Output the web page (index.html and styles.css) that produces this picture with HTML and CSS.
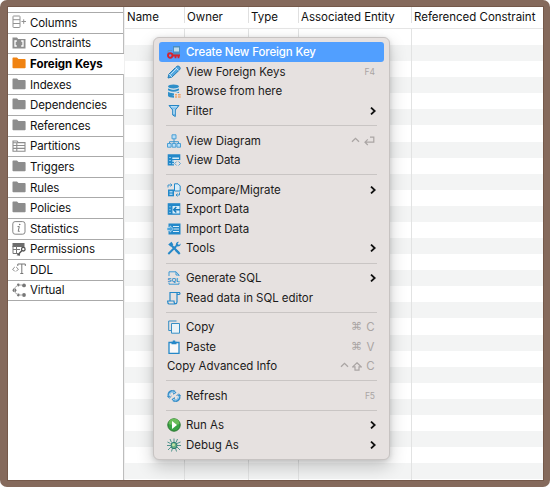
FILE: index.html
```html
<!DOCTYPE html>
<html lang="en">
<head>
<meta charset="utf-8">
<title>Foreign Keys</title>
<link rel="stylesheet" href="styles.css">
</head>
<body>
<svg class="defs" width="0" height="0">
  <symbol id="folder" viewBox="0 0 14 12"><path d="M.5 1.2Q.5.5 1.2.5H5l1.500 1.600h6.300Q13.600 2.100 13.600 2.900V10.500Q13.600 11.300 12.800 11.300H1.300Q.5 11.300.5 10.500Z" fill="currentColor"/></symbol>
  <symbol id="chevron" viewBox="0 0 6 8"><path d="M1 .6 4.700 4 1 7.400" fill="none" stroke="#111" stroke-width="1.800"/></symbol>
  <symbol id="ctrl" viewBox="0 0 9 6"><path d="M1 4.800 4.500 1.300 8 4.800" fill="none" stroke="currentColor" stroke-width="1.300"/></symbol>
</svg>
<div class="window">
  <nav class="sidebar">
    <div class="tab"><svg viewBox="0 0 14 14"><g fill="none" stroke="#929292"><rect x="1" y="1" width="7" height="11.500" rx=".6"/><path d="M1 4.700h7M1 8.500h7M9.500 6.500H14M11.700 4.300v4.500"/></g></svg><span>Columns</span></div>
    <div class="tab"><svg viewBox="0 0 14 14"><path d="M.5 1.500H5l1.200 1.500h7.300v9.500H.5z" fill="#8d8d8d"/><path d="M4.800 5H3v5h1.800M9.200 5H11v5H9.200" fill="none" stroke="#fff" stroke-width="1.300"/></svg><span>Constraints</span></div>
    <div class="tab active"><svg class="folder"><use href="#folder"/></svg><span>Foreign Keys</span></div>
    <div class="tab"><svg class="folder"><use href="#folder"/></svg><span>Indexes</span></div>
    <div class="tab"><svg class="folder"><use href="#folder"/></svg><span>Dependencies</span></div>
    <div class="tab"><svg class="folder"><use href="#folder"/></svg><span>References</span></div>
    <div class="tab"><svg viewBox="0 0 14 14"><path d="M1 2h4l1.200 1.500H13v8.700H1zM1 3.700h12M1 6.500h12M1 9.400h12M4.800 3.700v8.500" fill="none" stroke="#8d8d8d" stroke-width="1.100"/></svg><span>Partitions</span></div>
    <div class="tab"><svg class="folder"><use href="#folder"/></svg><span>Triggers</span></div>
    <div class="tab"><svg class="folder"><use href="#folder"/></svg><span>Rules</span></div>
    <div class="tab"><svg class="folder"><use href="#folder"/></svg><span>Policies</span></div>
    <div class="tab"><svg viewBox="0 0 14 14"><rect x=".8" y=".6" width="12.200" height="12.600" rx="2.300" fill="none" stroke="#858585"/><path d="M5.500 5.600h1.800L6.200 10.300h1.500" fill="none" stroke="#777"/><circle cx="7.700" cy="3.500" r=".8" fill="#777"/></svg><span>Statistics</span></div>
    <div class="tab"><svg viewBox="0 0 14 14"><path d="M.5 1h12v4H.5z" fill="#6d6d6d"/><path d="M1 4v7.500h5M1 7.500h7M4.500 4v7.500" fill="none" stroke="#777"/><circle cx="11.300" cy="7.200" r="1.800" fill="none" stroke="#555" stroke-width="1.300"/><path d="m10 8.500-4 4.200 2 .3" fill="none" stroke="#555" stroke-width="1.400"/></svg><span>Permissions</span></div>
    <div class="tab"><svg viewBox="0 0 14 14"><path d="M2.800 5 .6 7.200l2.200 2.200M4.200 5l2.200 2.200-2.200 2.200" fill="none" stroke="#858585"/><path d="M5.800 4V2h7.500v2M9.800 2v9.500M8.300 11.500h3" fill="none" stroke="#777"/></svg><span>DDL</span></div>
    <div class="tab"><svg viewBox="0 0 14 14"><g fill="#777"><circle cx="6.300" cy="2" r="1.400"/><circle cx="12" cy="2.400" r="1.900"/><circle cx="2.500" cy="7.200" r="1.900"/><circle cx="6.300" cy="12" r="1.400"/><circle cx="12" cy="12" r="1.900"/></g><path d="M6 2 2.500 5v4L6 12M7 2h3M7 12h3" fill="none" stroke="#aaa"/></svg><span>Virtual</span></div>
  </nav>
  <main class="table">
    <div class="head"><div class="c1">Name</div><div class="c2">Owner</div><div class="c3">Type</div><div class="c4">Associated Entity</div><div class="c5">Referenced Constraint</div></div>
    <div class="body"><div class="c1"></div><div class="c2"></div><div class="c3"></div><div class="c4"></div><div class="c5"></div></div>
  </main>
</div>

<div class="menu">
  <div class="item selected"><svg viewBox="0 0 14 14"><path d="M6 1h7v9H6z" fill="#4c8fc3"/><path d="M7 2.500h5v4H7z" fill="#c1dceb"/><path d="M1 5.500h4M1 8V5.500" stroke="#6794b5" fill="none"/><circle cx="3.200" cy="10.500" r="2.200" fill="none" stroke="#d6222d" stroke-width="1.900"/><path d="M5 10.500h8M8.500 10.500v2.700M11.500 10.500v2.700" stroke="#d6222d" stroke-width="1.800"/></svg><span>Create New Foreign Key</span></div>
  <div class="item"><svg viewBox="0 0 14 14"><path d="m1 13 1-4 7.500-7.500Q11 .3 12.500 1.700T12.600 4.800L5 12Z" fill="#55a8df" stroke="#237eb9"/><path d="M3.500 9.500 10 3M8.500 2.500l3 3M2 9l3 3" stroke="#d8edfa" stroke-width=".8"/></svg><span>View Foreign Keys</span><kbd class="small">F4</kbd></div>
  <div class="item"><svg viewBox="0 0 14 14"><g fill="#2f8fc9"><ellipse cx="6.500" cy="2.500" rx="5.500" ry="2"/><path d="M1 3.900q5.500 3 11 0v2.300q-5.500 3-11 0zM1 7.400q5.500 3 11 0V9H7v2.500H1zM1 10.500l6 1.500v1.800Q2 13.500 1 12z"/></g><path d="M1 4q5.500 3 11 0M1 7.500q5.500 3 11 0" fill="none" stroke="#d5e6f0" stroke-width=".8"/><path d="M8 10h2v1.500H8zm3 0h2.700v1.500H11zm-3 2.300h2v1.500H8zm3 0h2.700v1.500H11z" fill="#f0a66d"/></svg><span>Browse from here</span></div>
  <div class="item"><svg viewBox="0 0 14 14"><path d="M2 1.500h10L8.300 6v6.500L5.700 11V6z" fill="#81c0eb" stroke="#2585c4"/><path d="M4 2.800h6M7 5v5" stroke="#cce8fb"/></svg><span>Filter</span><svg class="arrow"><use href="#chevron"/></svg></div>
  <hr>
  <div class="item"><svg viewBox="0 0 14 14"><path d="M7 5v3M2.500 9V7.700h9V9M7 7.700V9" fill="none" stroke="#3c95cd"/><path d="M5 .8h4v4H5zM.5 9.500h3.600v3.700H.5zm4.700 0h3.600v3.700H5.200zm4.700 0h3.600v3.700H9.900z" fill="#b9def6" stroke="#4a9fd5"/></svg><span>View Diagram</span><kbd><svg class="ctrl"><use href="#ctrl"/></svg><svg class="return" viewBox="0 0 11 10"><path d="M6 1.200h3.800v5H1M3.800 3.400 1 6.200 3.800 9" fill="none" stroke="currentColor" stroke-width="1.200"/></svg></kbd></div>
  <div class="item"><svg viewBox="0 0 14 14"><path d="M.7 1.200h12.600V7H7v5.500H.7z" fill="#2388c9"/><path d="M5.300 4.500h6.700v1.500H5.300zM5.300 7.300h2v1.500h-2zM5.300 10h1.500v1.300H5.300z" fill="#d5ebf8"/><path d="M2 4.500h2M2 7.500h2M2 10.500h2" stroke="#7fc0e8"/><path d="m9.700 8.500-2 2 2 2M11.500 8.500l2 2-2 2" fill="none" stroke="#5ca5d4"/></svg><span>View Data</span></div>
  <hr>
  <div class="item"><svg viewBox="0 0 14 14"><path d="M1 6.500h6v6.800H1z" fill="#2388c9"/><path d="M2.500 8h3v1.500h-3zm0 2.500h3V12h-3z" fill="#a8d5f2"/><path d="M7.500.8H11L13.200 3v5H7.500z" fill="#d7edfb" stroke="#2388c9"/><path d="M1 4.500V2h4M3.500.5 5 2 3.500 3.500M12.500 9.500V12H9M10.500 10.500 9 12l1.500 1.500" fill="none" stroke="#3c95cd"/></svg><span>Compare/Migrate</span><svg class="arrow"><use href="#chevron"/></svg></div>
  <div class="item"><svg viewBox="0 0 14 14"><path d="M.7 1.200h12.600v11.600H.7z" fill="#2388c9"/><path d="M5.500 4h7v7.500h-7z" fill="#d8edf9"/><path d="M2 4.800h2M2 7.700h2M2 10.500h2" stroke="#75bce8"/><path d="M9.300 5 6.700 7.700l2.600 2.700M7 7.700h6" fill="none" stroke="#187bbd" stroke-width="1.500"/></svg><span>Export Data</span></div>
  <div class="item"><svg viewBox="0 0 14 14"><path d="M1.500 1.500h12v11h-12z" fill="#2388c9"/><path d="M6 4.500h6M7 7h5M6 9.500h6" stroke="#d8edf9" stroke-width="1.200"/><path d="M0 5.500h3V3.800L6.500 7 3 10.200V8.500H0z" fill="#4da4db" stroke="#d8edf9" stroke-width=".6"/></svg><span>Import Data</span></div>
  <div class="item"><svg viewBox="0 0 14 14"><path d="M3.500 3.500 12 12" stroke="#2588c8" stroke-width="2.100"/><path d="M1.200 3.500 4.500.8l1.800 2.700-2.700 2z" fill="#2588c8"/><path d="m1.300 13 8-8" stroke="#2588c8" stroke-width="1.900"/><path d="M9 5.300Q8 1 12 .8l-1.500 2L12 4l1.600-1.500Q14 6 9 5.300M9.500 8.500l4 3.700-1.500 1.500-4-4z" fill="#2588c8"/></svg><span>Tools</span><svg class="arrow"><use href="#chevron"/></svg></div>
  <hr>
  <div class="item"><svg viewBox="0 0 14 14"><path d="M2 5V.8h7L12 4v1M2 11.500v1.700h10v-1.700M9 .8V4h3" fill="none" stroke="#3c98d3"/><text x=".6" y="10.500" class="sql">SQL</text></svg><span>Generate SQL</span><svg class="arrow"><use href="#chevron"/></svg></div>
  <div class="item"><svg viewBox="0 0 14 14"><path d="M3 9.500v-8h9.500q1.200 1.500-.7 2H10V11q-.1 2-2 2H2Q.5 12.700.7 10H7q0 3 2 2.700M10 3.500q-.2-2 1-2" fill="none" stroke="#2588c8" stroke-width="1.200"/></svg><span>Read data in SQL editor</span></div>
  <hr>
  <div class="item"><svg viewBox="0 0 14 14"><path d="M4.500 3.500h8v9.700h-8z" fill="#eaf3f8" stroke="#368ec5"/><path d="M9.500 1H1.700v9.500h2.500" fill="none" stroke="#368ec5"/></svg><span>Copy</span><kbd><i>⌘</i><b>C</b></kbd></div>
  <div class="item"><svg viewBox="0 0 14 14"><path d="M2 2.500h10v10.800H2z" fill="#f9f9f9" stroke="#2588c8" stroke-width="1.300"/><path d="M4.500 1.800h1.300V.5h2.400v1.300h1.300v2.500h-5z" fill="#2588c8"/></svg><span>Paste</span><kbd><i>⌘</i><b>V</b></kbd></div>
  <div class="item"><span>Copy Advanced Info</span><kbd><svg class="ctrl"><use href="#ctrl"/></svg><svg class="shift" viewBox="0 0 10 9"><path d="M5 .8 9.200 4.800H7v3.400H3V4.800H.8z" fill="none" stroke="currentColor" stroke-width="1.200"/></svg><b>C</b></kbd></div>
  <hr>
  <div class="item"><svg viewBox="0 0 14 14"><g fill="none" stroke="#398fc9" stroke-width="2.400"><path d="M2 8Q.8 3.500 4.800 2.200L8 3M12 6q1.200 4.500-2.800 5.800L6 11"/></g><path d="m6.500.8 3 3-3.500 2M7.500 13.200l-3-3L8 8" fill="#398fc9"/><path d="M2.200 7Q1.800 4 5 2.800L8 3.500M11.800 7q.4 3-2.800 4.200L6 10.500" fill="none" stroke="#b9e1f8" stroke-width=".9"/><path d="M.5 7 2.300 9.200 4.500 7M9.500 7l2.200-2.200L13.500 7" fill="none" stroke="#398fc9"/></svg><span>Refresh</span><kbd class="small">F5</kbd></div>
  <hr>
  <div class="item"><svg viewBox="0 0 14 14"><circle cx="7" cy="7" r="6.200" fill="#38a343" stroke="#27732e"/><path d="M1.500 6A5.500 5.500 0 0 1 12.500 6Q7 8 1.500 6" fill="#68bd59"/><path d="m5 3 5 4-5 4z" fill="#fff"/></svg><span>Run As</span><svg class="arrow"><use href="#chevron"/></svg></div>
  <div class="item"><svg viewBox="0 0 14 14"><path d="m3 1 1.500 3.500M7 .5V4M10.500 1 9 4.500M.5 4l3 1.500M10 5.500 13.500 4M0 7.500h14M1 12l3-3M4.500 13.500 5.500 10M8.500 10l1 3.500M10 9l3 3" stroke="#3f8b83" stroke-width=".9"/><ellipse cx="7" cy="7.500" rx="3" ry="3.200" fill="#6aae86" stroke="#267a70"/><circle cx="6.500" cy="6.800" r="1.500" fill="#c5e4a6"/></svg><span>Debug As</span><svg class="arrow"><use href="#chevron"/></svg></div>
</div>
</body>
</html>
```
FILE: styles.css
```css
* { box-sizing: border-box; }
html { background: #fff; }
body {
  margin: 0;
  width: 550px;
  height: 487px;
  overflow: hidden;
  padding: 7px 7px 7px 8px;
  border-radius: 7px;
  background: #856a5c;
  color: #111;
  font: 11.5px/14px Inter, "Liberation Sans", sans-serif;
}
.defs { display: none; }
.window { display: flex; width: 535px; height: 473px; background: #fff; box-shadow: 0 0 0 1px #75594a; }
.sidebar { width: 116px; padding-top: 5px; border-right: 1px solid #bdbdbd; }
.tab {
  display: flex;
  align-items: center;
  height: 20.6px;
  padding: 0 0 0 4px;
  gap: 4px;
  border-top: 1px solid #aaa;
  color: #111;
  letter-spacing: -.1px;
}
.tab:last-child { height: 21.6px; padding-bottom: 1px; border-bottom: 1px solid #aaa; }
.tab svg { width: 14px; height: 14px; margin-top: -1px; }
.tab svg.folder { height: 12px; margin-top: -2px; color: #8d8d8d; }
.tab.active { width: 117px; background: #fff; font-weight: 700; color: #000; letter-spacing: 0; }
.tab.active svg.folder { color: #f08312; }
.table { flex: 1; display: flex; flex-direction: column; border-left: 1px solid #f0f0f0; }
.head, .body { display: grid; grid-template-columns: 60px 64px 50px 113px 1fr; }
.head { height: 22px; border-bottom: 1px solid #e5e5e5; }
.head div { padding: 3px 0 0 2px; border-right: 1px solid #e0e0e0; height: 16px; white-space: nowrap; color: #111; letter-spacing: -.02px; }
.body { flex: 1; background: repeating-linear-gradient(#fff 0 16.08px, #f3f4f4 16.08px 32.16px); }
.body div { border-right: 1px solid #e2e3e3; }
.head .c5, .body .c5 { border-right: 0; }
.menu {
  position: absolute;
  left: 153px;
  top: 37px;
  width: 237px;
  height: 422.5px;
  padding: 4.4px 5px 5px;
  border: 1px solid #c7c3c2;
  border-radius: 6px;
  background: #e6e1e0;
  box-shadow: 0 7px 17px #0003, 0 1px 5px #0002;
}
.item { display: flex; align-items: center; height: 19.64px; padding: 0 8px; color: #1c1b1b; border-radius: 3px; white-space: nowrap; letter-spacing: -.04px; }
.item > svg:first-child { width: 14px; height: 14px; margin-right: 5px; }
.item.selected { background: #519fff; color: #fff; font-weight: 500; letter-spacing: -.12px; }
hr { height: 9.82px; margin: 0 7px; border: 0; background: linear-gradient(#c9c5c4, #c9c5c4) center / 100% 1px no-repeat; }
.item .arrow { width: 6px; height: 8px; margin-left: auto; }
kbd { display: flex; align-items: center; margin-left: auto; padding-right: 1px; color: #aaa5a4; font: inherit; gap: 4px; }
kbd.small { font-size: 8.5px; }
kbd i { font: 11px "DejaVu Sans", sans-serif; }
kbd b { font-weight: 400; width: 9px; text-align: center; }
.ctrl { width: 9px; height: 6px; margin-bottom: 2px; }
.return { width: 11px; height: 10px; }
.shift { width: 10px; height: 9px; margin-left: -1px; }
.sql { font: 700 6px "Liberation Sans", sans-serif; fill: #2588c8; }
```
